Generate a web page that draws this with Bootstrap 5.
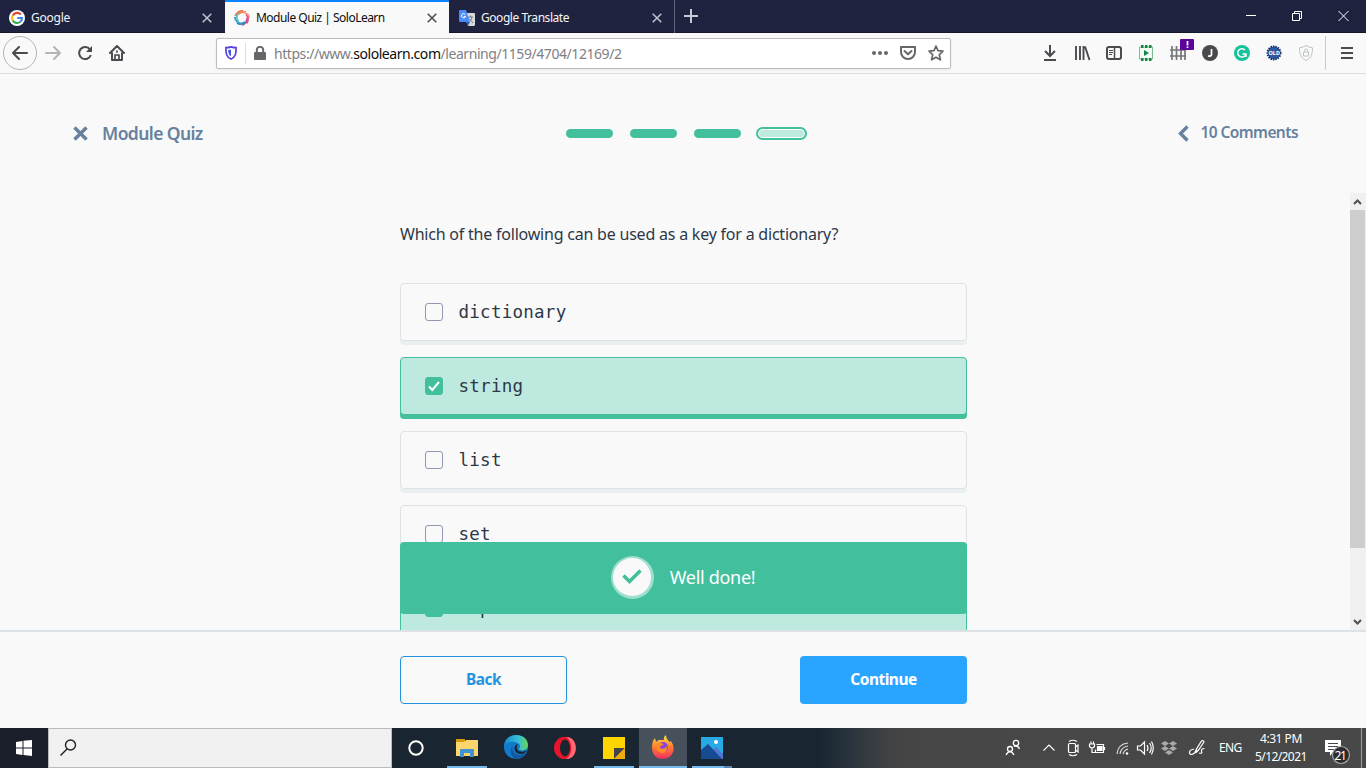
<!DOCTYPE html>
<html lang="en">
<head>
<meta charset="utf-8">
<title>Module Quiz | SoloLearn</title>
<link href="https://cdn.jsdelivr.net/npm/bootstrap@5.3.0/dist/css/bootstrap.min.css" rel="stylesheet">
<style>
body{width:1366px;height:768px;overflow:hidden;background:#f9f9fa;font-family:"Noto Sans","Open Sans",sans-serif;color:#2d3846}
svg{display:block;flex:none}
.tabstrip{height:33px;background:#20233f;border-bottom:1px solid #14162b;font-size:12px;letter-spacing:-.25px;color:#f5f5fa}
.tab{height:33px;padding:3px 0 0 9px}
.tab span{padding-left:6px;flex:1;white-space:nowrap}
.tab-on{background:#f9f9fa;color:#0c0c0d;border-top:2px solid #0a84ff;padding-top:1px}
.tab-on span{letter-spacing:-.52px}
.tab-x{color:#c3c4ce;margin-right:13px}
.tab-on .tab-x{color:#4a4a4f;margin-right:12px}
.toolbar{height:41px;border-bottom:1px solid #dedee0;color:#4a4a4f}
.backbtn{width:34px;height:34px;border:1px solid #b4b4b6;border-radius:50%;margin-left:3px}
.urlbar{width:735px;height:31px;border:1px solid #bcbcbe;border-radius:2px;background:#fff;box-shadow:0 1px 3px #0001;font-size:14px;color:#808084}
.urlbar b{font-weight:400;color:#0c0c0d}
.urltext{letter-spacing:-.44px;margin-left:7px;line-height:20px;padding-top:2px;white-space:nowrap}
.quizhead{height:119px;color:#66819d;font-weight:600;padding-left:73px;padding-right:68px}
.quiztitle{font-size:17.5px;letter-spacing:-.6px;margin-left:14px;width:108px;white-space:nowrap}
.step{width:47px;height:9px;border-radius:5px;background:#42c09d}
.step-now{width:51px;height:13px;border:2px solid #42c09d;border-radius:7px;background:#bde9de;box-shadow:inset 0 0 0 1px #fff;margin-left:-2px}
.comments{font-size:15.5px;letter-spacing:-.57px;margin-left:11px;white-space:nowrap;padding-bottom:1px}
.quizbody{height:437px;overflow:hidden}
.quizcol{width:567px;margin-left:400px}
.question{font-size:16px;line-height:24px;padding-top:29px;margin-bottom:37px;letter-spacing:-.215px;white-space:nowrap}
.option{height:58px;border:1px solid #dde2e6;border-radius:4px;box-shadow:0 4px 0 #e9eeef;padding-left:24px;margin-bottom:16px;font-family:"DejaVu Sans Mono",monospace;font-size:17.5px;letter-spacing:.26px;flex:none}
.option-on{background:#bde9de;border-color:#42c09d;box-shadow:0 4px 0 #42c09d}
.tick{width:18px;height:18px;border:1px solid #8f99b1;border-radius:3px;margin-right:15.5px}
.option-on .tick{background:#42c09d;border-color:#42c09d}
.toast-done{left:400px;bottom:16px;width:567px;height:72px;border-radius:4px;background:#42c09d;color:#fff;font-size:18px;letter-spacing:-.3px;padding:0 1px 2px 0}
.medal{width:43px;height:43px;border:2px solid #a0dfce;border-bottom-width:3px;border-right-width:3px;border-radius:50%;background:#f9f9fa;margin-right:16px}
.scroller{width:16px;background:#f0f0f0}
.thumb{height:338px;width:15px;background:#cdcdcd}
.quizfoot{height:98px;border-top:2px solid #dde2e6;padding:0 399px 0 400px}
.quizbtn{width:167px;height:48px;font-weight:700;font-size:15.5px;letter-spacing:-.5px;border-radius:4px;padding:0}
.btn-back{border:1px solid #2493df;color:#2493df}
.btn-go{background:#2aa5ff;color:#fff}
.taskbar{height:40px;background:linear-gradient(90deg,#1b1e2a 0,#192531 400px,#192631 820px,#2a343e 850px,#424344 890px,#474747 930px,#484848 100%);color:#fff}
.searchbox{width:344px;height:40px;background:#f1f1f1;border:1px solid #bbb}
.app{height:40px;padding-top:7px}
.running{border-bottom:2px solid #76b9ed}
.tray{font-size:12px;letter-spacing:-.3px}
</style>
</head>
<body class="d-flex flex-column">
<svg width="0" height="0" class="position-absolute"><defs>
<symbol id="x" viewBox="0 0 10 10"><path d="M.7.7l8.6 8.6M9.3.7L.7 9.3" stroke="currentColor" stroke-width="1.5"/></symbol>
</defs></svg>
<header class="tabstrip d-flex flex-none">
  <div class="tab d-flex align-items-center" style="width:225px">
    <svg width="16" height="16" viewBox="0 0 16 16"><circle cx="8" cy="8" r="8" fill="#fff"/><g fill="none" stroke-width="2.1"><path d="M11.9 4.5A5 5 0 0 0 3.7 5.6" stroke="#ea4335"/><path d="M3.7 5.6a5 5 0 0 0 0 4.8" stroke="#fbbc05"/><path d="M3.7 10.4a5 5 0 0 0 7.6 1.4" stroke="#34a853"/><path d="M11.3 11.8A5 5 0 0 0 13 8H8.2" stroke="#4285f4"/></g></svg>
    <span>Google</span><svg width="10" height="10" class="tab-x"><use href="#x"/></svg>
  </div>
  <div class="tab tab-on d-flex align-items-center" style="width:224px">
    <svg width="16" height="16" viewBox="-8 -8 16 16" fill="none" stroke-width="1.7"><path d="M-6.800-2Q-5-7 1-7.200" stroke="#f36b3b"/><path d="M-4.500-3Q-1-7 4-5.800" stroke="#f58a5c"/><path d="M1-5.500Q7-5 7.200 0" stroke="#f8a07a"/><path d="M4-3.500Q8 1 4.500 5.500" stroke="#ed4b82"/><path d="M5 0Q5 5.500 0 7.200" stroke="#b45a9c"/><path d="M3 4Q-1 7.500-5 5" stroke="#218cba"/><path d="M0 5.500Q-6.500 5-7.200-1" stroke="#2a9fc4"/><path d="M-3.500 3.500Q-7-1-3.500-5" stroke="#56c4c3"/></svg>
    <span>Module Quiz | SoloLearn</span><svg width="10" height="10" class="tab-x"><use href="#x"/></svg>
  </div>
  <div class="tab d-flex align-items-center" style="width:226px;border-right:1px solid #62647a;padding-left:10px">
    <svg width="16" height="16" viewBox="0 0 16 16"><path d="M6 3h9.2l.8.8V15l-.8 1H9z" fill="#d8d9dc"/><path d="M9 7h5M11.5 5.5V7M13 7q-1 4-3.5 5.5M10.5 9l3.5 4" stroke="#718087" fill="none"/><path d="M1 0h6l4 12H1a1 1 0 0 1-1-1V1a1 1 0 0 1 1-1z" fill="#4b8bf5"/><path d="M7 12h4l-2 4z" fill="#3261bd"/><path d="M6.3 4.6A2.1 2.1 0 1 0 6.6 6.4H4.6" stroke="#fff" fill="none"/></svg>
    <span style="letter-spacing:-.45px">Google Translate</span><svg width="10" height="10" class="tab-x" style="margin-right:12px"><use href="#x"/></svg>
  </div>
  <svg width="14" height="14" style="margin:9px 0 0 9px"><path d="M7 0v14M0 7h14" stroke="#c9c9d3" stroke-width="2"/></svg>
  <svg class="ms-auto" width="120" height="32" fill="none" stroke="#fff"><path d="M0 15.500h10M46.500 13.500h7v7h-7zM48.500 13v-1.500h7v7h-2M92.500 11l10 10M102.500 11l-10 10"/></svg>
</header>
<nav class="toolbar d-flex align-items-center">
  <div class="backbtn d-flex align-items-center justify-content-center"><svg width="16" height="14" fill="none" stroke="currentColor" stroke-width="2" stroke-linecap="round" stroke-linejoin="round"><path d="M15 7H1.500M7 1L1 7l6 6"/></svg></div>
  <svg width="17" height="14" style="margin-left:8px" fill="none" stroke="#b5b5b8" stroke-width="2" stroke-linecap="round" stroke-linejoin="round"><path d="M1 7h13.500M9 1l6 6-6 6"/></svg>
  <svg width="16" height="16" style="margin-left:15px" fill="none" stroke="currentColor" stroke-width="2"><path d="M13 4.600A6 6 0 1 0 13.800 10"/><path d="M15 1v6H9z" fill="currentColor" stroke="none"/></svg>
  <svg width="16" height="16" style="margin-left:16px" fill="none" stroke="currentColor" stroke-width="2" stroke-linejoin="round" stroke-linecap="round"><path d="M1 8l7-7 7 7M3 8v7h10V8"/><path d="M6 15v-5h4v5M8 6v1" stroke-width="1.700"/></svg>
  <div class="urlbar d-flex align-items-center" style="margin-left:91px">
    <svg width="12" height="14" viewBox="0 0 12 14" style="margin-left:8px" fill="none"><path d="M6 .9Q8.500 1.700 11.100 1.700C11.100 7 11 10.700 6 13.100 1 10.700.900 7 .900 1.700Q3.500 1.700 6 .9z" stroke="#5b41df" stroke-width="1.700"/><path d="M6 3.500v6.800Q3.200 9 3.200 4z" fill="#4557e4"/></svg>
    <i style="width:1px;height:21px;background:#dedee0;margin-left:8px"></i>
    <svg width="12" height="14" style="margin-left:8px"><path d="M2.800 7V4a3.200 3.200 0 0 1 6.400 0v3" stroke="#67676b" stroke-width="2" fill="none"/><rect y="6" width="12" height="8" rx="1" fill="#67676b"/></svg>
    <span class="urltext" style="margin-left:8px">https://www.<b>sololearn.com</b>/learning/1159/4704/12169/2</span>
    <svg class="ms-auto" width="16" height="6" fill="#67676b"><circle cx="2" cy="3" r="2"/><circle cx="8" cy="3" r="2"/><circle cx="14" cy="3" r="2"/></svg>
    <svg width="16" height="14" style="margin:0 12px" fill="none" stroke="#67676b" stroke-width="2" stroke-linejoin="round"><path d="M1 1h14v5a7 7 0 0 1-14 0z"/><path d="M4.500 5L8 8.300 11.500 5" stroke-linecap="round"/></svg>
    <svg width="16" height="16" style="margin-right:6px" fill="none" stroke="#67676b" stroke-width="1.700" stroke-linejoin="round"><path d="M8 1l2 4.600 5 .500-3.700 3.500 1.100 5.200L8 12.200l-4.400 2.600 1.100-5.200L1 6.100l5-.5z"/></svg>
  </div>
  <svg width="326" height="40" viewBox="1040 33 326 40" class="ms-auto" fill="none" stroke="#4a4a4f" stroke-width="2">
    <path d="M1050 45v11M1045 51l5 5 5-5M1044 60h12"/>
    <path d="M1076 46v14M1080 46v14M1083.500 46v14M1085 46.500l4.500 13.500" stroke-width="1.900"/>
    <rect x="1107" y="47" width="14" height="12" rx="2"/><path d="M1114.500 47v12" stroke-width="1.500"/><path d="M1109 50.500h4M1109 52.500h4M1109 54.500h3" stroke-width="1"/>
    <path d="M1139.500 47h13v12h-13z" fill="#f2faf4" stroke="#79bd91" stroke-width="1"/><path d="M1141 46.500h11M1141 59.500h11" stroke="#168447" stroke-width="3" stroke-dasharray="2.500 1.500"/><path d="M1144 50v6l5-3z" fill="#168447" stroke="none"/>
    <path d="M1172 46v14M1176.500 46v14M1181 46v14M1185 50v10M1170 50h16M1170 56h16" stroke="#77777a" stroke-width="1.700"/><rect x="1180" y="39" width="14" height="11" rx="1" fill="#5b049b" stroke="none"/><path d="M1187.500 41v4.500M1187.500 46.500v1.500" stroke="#fff" stroke-width="1.700"/>
    <circle cx="1210" cy="53" r="8" fill="#4a4a4d" stroke="none"/><path d="M1211.500 49v5.500q0 2-3.500 1.500" stroke="#fff" stroke-width="1.700"/>
    <circle cx="1242" cy="53" r="8" fill="#15c39a" stroke="none"/><path d="M1245 50a4.200 4.200 0 1 0 .8 4.500M1242.500 54h3.500v3" stroke="#fff" stroke-width="1.500"/>
    <circle cx="1274" cy="53" r="6.500" fill="#3059a2" stroke="#142f60" stroke-width="2" stroke-dasharray="1.400 1"/><text x="1268.500" y="55" font-size="5.500" font-weight="700" fill="#fff" stroke="none">OLD</text>
    <path d="M1306 45.500q3 2 6.500 2.300c0 7-1.500 10-6.500 12.700-5-2.700-6.500-5.700-6.500-12.700q3.500-.3 6.500-2.300zM1303.500 52h5v4h-5zM1304.500 52v-1.500a1.500 1.500 0 0 1 3 0v1.500" stroke="#bcc3c5" stroke-width="1"/>
    <path d="M1325.500 36v34" stroke="#c9c9cb" stroke-width="1"/><path d="M1341 48h12M1341 53h12M1341 58h12"/>
  </svg>
</nav>
<main>
  <div class="quizhead d-flex align-items-center">
    <svg width="15" height="15" stroke="currentColor" stroke-width="3.500"><path d="M1.500 1.500l12 12M13.500 1.500l-12 12"/></svg>
    <div class="quiztitle">Module Quiz</div>
    <div class="d-flex align-items-center" style="gap:17px;margin-left:356px"><i class="step"></i><i class="step"></i><i class="step"></i><i class="step-now"></i></div>
    <svg class="ms-auto" width="12" height="17" fill="none" stroke="currentColor" stroke-width="3.300"><path d="M10.500 1.500l-7 7 7 7"/></svg>
    <div class="comments">10 Comments</div>
  </div>
  <div class="quizbody d-flex position-relative">
    <div class="quizcol d-flex flex-column">
      <div class="question">Which of the following can be used as a key for a dictionary?</div>
      <div class="option d-flex align-items-center"><i class="tick"></i>dictionary</div>
      <div class="option option-on d-flex align-items-center"><i class="tick"><svg width="16" height="16" fill="none" stroke="#fff" stroke-width="2"><path d="M3 8.500l3.300 3.500L13 4"/></svg></i>string</div>
      <div class="option d-flex align-items-center"><i class="tick"></i>list</div>
      <div class="option d-flex align-items-center"><i class="tick"></i>set</div>
      <div class="option option-on d-flex align-items-center"><i class="tick"></i>tuple</div>
    </div>
    <div class="toast-done position-absolute d-flex align-items-center justify-content-center"><div class="medal d-flex align-items-center justify-content-center"><svg width="20" height="15" fill="none" stroke="#42c09d" stroke-width="3.500"><path d="M1.500 6.500l6 6 11-11"/></svg></div><span>Well done!</span></div>
    <div class="scroller ms-auto d-flex flex-column">
      <svg width="16" height="17"><path d="M4 11l3.500-3.500L11 11" fill="none" stroke="#505050" stroke-width="2"/></svg>
      <div class="thumb"></div>
      <svg class="mt-auto" width="16" height="17"><path d="M4 7l3.500 3.500L11 7" fill="none" stroke="#505050" stroke-width="2"/></svg>
    </div>
  </div>
  <div class="quizfoot d-flex align-items-center justify-content-between"><button class="btn quizbtn btn-back">Back</button><button class="btn quizbtn btn-go">Continue</button></div>
</main>
<footer class="taskbar d-flex">
  <svg width="48" height="40" fill="#fff"><path d="M16 14l6.500-1v6.500H16zM23.500 12.800L32 12v7.500h-8.500zM16 20.500h6.500V27L16 26zM23.500 20.500H32V28l-8.500-1z"/></svg>
  <div class="searchbox"><svg width="40" height="38" fill="none" stroke="#202020" stroke-width="1.400"><circle cx="21.500" cy="16" r="5"/><path d="M18 20l-6.500 6.500"/></svg></div>
  <svg width="48" height="40"><circle cx="24" cy="20" r="6.700" fill="none" stroke="#fff" stroke-width="2"/></svg>
  <div class="app running d-flex justify-content-center" style="width:40px;margin-left:7px"><svg width="22" height="24"><path d="M0 4h9v4H0z" fill="#d99a09"/><path d="M0 7h8l2-2h12v16H0z" fill="#fdd56d"/><path d="M4 22v-7q0-1 1-1h12q1 0 1 1v7h-4v-4H8v4z" fill="#4093d3"/></svg></div>
  <div class="app d-flex justify-content-center" style="width:48px;margin-left:5px"><svg width="24" height="24" viewBox="0 0 24 24"><defs><linearGradient id="e"><stop stop-color="#1687d4"/><stop offset=".6" stop-color="#35bfd4"/><stop offset="1" stop-color="#68d456"/></linearGradient></defs><circle cx="12" cy="12" r="12" fill="#117acb"/><path d="M0 11C1-4 24-3 24 10c0 5-6 7-9 4 3-4-1-7-5-7Q4 6 0 11z" fill="url(#e)"/><path d="M9 11c-2 5 2 9 7 9q3 0 7-3-4 7-11 7C6 22 5 14 9 11z" fill="#12599f"/><path d="M14 9q-2 2-1 5c2 4 7 3 10 1-1 4-7 5-10 3-4-3-3-8 1-9z" fill="#192631"/></svg></div>
  <div class="app d-flex justify-content-center" style="width:48px;margin-left:1px"><svg width="22" height="24"><ellipse cx="11" cy="13" rx="11" ry="11.200" fill="#e9132b"/><path d="M12 2c13-1 13 23 0 22 7-4 7-18 0-22z" fill="#ff6974"/><ellipse cx="11" cy="13" rx="5" ry="8.500" fill="#192631"/></svg></div>
  <div class="app running d-flex justify-content-center" style="width:40px;margin-left:5px"><svg width="22" height="24"><path d="M0 2h22v22H0z" fill="#ffd500"/><path d="M11 13h11L11 24z" fill="#44434a"/><path d="M22 13v11H11z" fill="#edae0d"/></svg></div>
  <div class="app running d-flex justify-content-center" style="width:48px;margin-left:5px;background:#46515c"><svg width="24" height="24"><defs><linearGradient id="f" x2="0" y2="1"><stop stop-color="#ffe34b"/><stop offset=".5" stop-color="#ff7e2d"/><stop offset="1" stop-color="#f32c69"/></linearGradient></defs><path d="M2 6l2-3 1 4q3-3 6-2l2 0q-1-3 2-5 0 4 4 7l1-1q4 6 2 11c-3 9-17 9-20 1Q0 12 2 6z" fill="url(#f)"/><circle cx="12" cy="12" r="5" fill="#8545dd"/><path d="M6 8q5-1 7 2-4 0-4 3 4 2 7-2 0 8-6 7-7-3-4-10z" fill="#ff8a25"/></svg></div>
  <div class="app running d-flex justify-content-center" style="width:40px;margin-left:5px;border-image:linear-gradient(90deg,#76b9ed 31px,#5688b3 31px) 1"><svg width="22" height="24"><path d="M0 2h22v22H0z" fill="#27a9e6"/><path d="M12 15l3-3 7 7v5H12z" fill="#5176d1"/><path d="M0 15l7-6 14 15H0z" fill="#174b91"/><circle cx="15" cy="7" r="2" fill="#fff"/></svg></div>
  <svg width="634" height="40" viewBox="732 0 634 40" class="tray" fill="none" stroke="#fff" stroke-width="1.200">
    <g stroke-width="1.300"><circle cx="1016" cy="15" r="2.700"/><path d="M1014 18.500q4-1.500 5.500 2.500"/><circle cx="1010" cy="21" r="2.500"/><path d="M1006 27q4-7 8 0"/></g>
    <path d="M1043.500 22.500l5.500-5.500 5.500 5.500"/><path d="M1069 13.500q4-2.500 8 0M1069 26.500q4 2.500 8 0"/><rect x="1068.500" y="15.500" width="7" height="9" rx="1"/><path d="M1075.500 19l2.500-2v7l-2.500-2"/>
    <path d="M1096.500 16.500h7v8h-8v-3M1104.500 19v3"/><path d="M1097.500 18.500h4.500v4h-4.500z" fill="#fff"/><path d="M1089.500 16h5v2.500q-2.500 3-5 0zM1091 13.500v2.500M1093.500 13.500v2.500M1092 20v4.500h3.500"/>
    <path d="M1117 26q1-10 11-11M1120 26q1-7 8-8M1123 26q1-4 5-5" stroke="#ddd"/><circle cx="1127" cy="25.500" r="1.300" fill="#fff" stroke="none"/>
    <path d="M1137.500 18h3l4-4v12l-4-4h-3zM1147 17q2 3 0 6M1149.500 15q3.500 5 0 10M1151.500 13.500q3.500 6.500 0 13"/>
    <path d="M1161 15.500l4-2.500 4 2.500-4 2.500zM1169 15.500l4-2.500 4 2.500-4 2.500zM1161 20.500l4-2.500 4 2.500-4 2.500zM1169 20.500l4-2.500 4 2.500-4 2.500zM1165 24.500l4-2.500 4 2.500-4 2.500z" fill="#aaa" stroke="none"/>
    <path d="M1194 21q-5 1-4.500 4 1 3 5 0l1.500-3M1195.500 25l1-4 5-8q2-1 2.500 1l-5.500 8-3 3M1199 25q4 1 2.500-2-.5-2.500 3-2.500"/>
    <text x="1219" y="24" fill="#fff" stroke="none" textLength="23">ENG</text>
    <text x="1260" y="15" fill="#fff" stroke="none" textLength="42">4:31 PM</text><text x="1255" y="33" fill="#fff" stroke="none" textLength="52">5/12/2021</text>
    <path d="M1325 12h16v12h-8l-3 4v-4h-5z" fill="#fff" stroke="none"/><path d="M1328 15.500h10M1328 18.500h10M1328 21.500h6" stroke="#484848"/>
    <circle cx="1341" cy="27" r="8.500" fill="#2b2c2d" stroke="#aaa"/><text x="1334.500" y="31.500" fill="#fff" stroke="none" textLength="12">21</text><path d="M1361.500 0v40" stroke="#999"/>
  </svg>
</footer>
<script src="https://cdn.jsdelivr.net/npm/bootstrap@5.3.0/dist/js/bootstrap.bundle.min.js"></script>
</body>
</html>
